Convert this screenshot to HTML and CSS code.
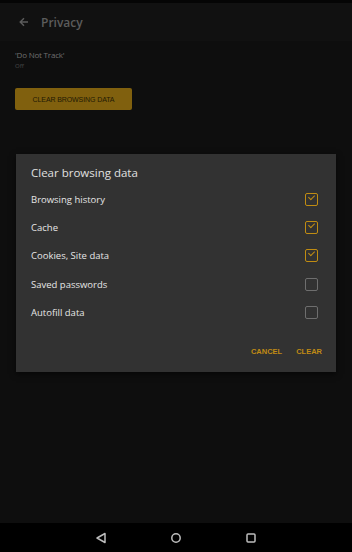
FILE: index.html
```html
<!DOCTYPE html>
<html lang="en">
<head>
    <meta charset="UTF-8">
    <meta name="viewport" content="width=device-width, initial-scale=1.0">
    <title>Privacy</title>
    <link rel="stylesheet" href="styles.css">
</head>
<body>
    <div class="screen">
        <div class="status"></div>
        <header class="topbar">
            <svg class="back" width="10" height="10" viewBox="0 0 10 10">
                <path d="M9 5H1.5M5 1.2L1.2 5L5 8.8" fill="none" stroke="#5c5c5c" stroke-width="1.4"/>
            </svg>
            <span class="title">Privacy</span>
        </header>
        <main class="content">
            <div class="pref">
                <div class="pref-name">'Do Not Track'</div>
                <div class="pref-value">Off</div>
            </div>
            <button class="clear-btn">CLEAR BROWSING DATA</button>

            <div class="dialog">
                <div class="dialog-title">Clear browsing data</div>
                <ul class="options">
                    <li><span>Browsing history</span><span class="box checked"></span></li>
                    <li><span>Cache</span><span class="box checked"></span></li>
                    <li><span>Cookies, Site data</span><span class="box checked"></span></li>
                    <li><span>Saved passwords</span><span class="box"></span></li>
                    <li><span>Autofill data</span><span class="box"></span></li>
                </ul>
                <div class="actions">
                    <span>CANCEL</span>
                    <span>CLEAR</span>
                </div>
            </div>
        </main>
        <nav class="navbar">
            <svg width="12" height="12" viewBox="0 0 12 12"><path d="M10 1.5V10.5L2 6Z" fill="none" stroke="#bdbdbd" stroke-width="1.5" stroke-linejoin="round"/></svg>
            <svg width="12" height="12" viewBox="0 0 12 12"><circle cx="6" cy="6" r="4.2" fill="none" stroke="#bdbdbd" stroke-width="1.5"/></svg>
            <svg width="12" height="12" viewBox="0 0 12 12"><rect x="2" y="2" width="8" height="8" rx="1" fill="none" stroke="#bdbdbd" stroke-width="1.5"/></svg>
        </nav>
    </div>
</body>
</html>
```

FILE: styles.css
```css
html, body {
    margin: 0;
    padding: 0;
    background-color: #0e0e0e;
}
body {
    font-family: "Open Sans", "Noto Sans", sans-serif;
}
.screen {
    width: 352px;
    height: 552px;
    display: flex;
    flex-direction: column;
    background-color: #0e0e0e;
}
.status {
    height: 3px;
    background-color: #050505;
}
.topbar {
    height: 38px;
    display: flex;
    align-items: center;
    padding-left: 19px;
    background-color: #111111;
}
.back {
    margin-right: 12px;
}
.title {
    font-size: 12px;
    font-weight: 600;
    color: #5c5c5c;
}
.content {
    flex: 1;
    padding: 8px 15px 0 15px;
}
.pref-name {
    font-size: 8px;
    color: #6e6e6e;
    letter-spacing: -0.2px;
}
.pref-value {
    font-size: 6px;
    color: #4a4a4a;
    margin-top: 2px;
}
.clear-btn {
    margin-top: 18px;
    width: 117px;
    height: 22px;
    border: none;
    border-radius: 2px;
    background-color: #80600e;
    color: #221a04;
    font-family: "Liberation Sans", sans-serif;
    font-size: 7px;
    padding: 0;
    letter-spacing: -0.1px;
}
.dialog {
    margin-top: 44px;
    margin-left: 1px;
    width: 320px;
    height: 218px;
    background-color: #323232;
    box-shadow: 0 2px 6px rgba(0,0,0,0.6);
    box-sizing: border-box;
    padding: 11px 18px 0 15px;
}
.dialog-title {
    font-size: 11.5px;
    color: #e0e0e0;
    height: 17px;
}
.options {
    list-style: none;
    margin: 0;
    padding: 0;
    margin-top: 3px;
}
.options li {
    height: 28.3px;
    display: flex;
    align-items: center;
    justify-content: space-between;
    font-size: 9.5px;
    color: #e6e6e6;
}
.box {
    width: 11px;
    height: 11px;
    border: 1.6px solid #6e6e6e;
    border-radius: 2px;
    position: relative;
}
.box.checked {
    border-color: #c08c12;
}
.box.checked::after {
    content: "";
    position: absolute;
    left: 3px;
    top: 1px;
    width: 5px;
    height: 3px;
    border-left: 1.6px solid #c08c12;
    border-bottom: 1.6px solid #c08c12;
    transform: rotate(-45deg);
    transform-origin: 40% 60%;
}
.actions {
    display: flex;
    justify-content: flex-end;
    gap: 14px;
    margin-top: 21px;
    margin-right: -4px;
    font-family: "Liberation Sans", sans-serif;
    font-size: 7.5px;
    font-weight: bold;
    color: #c08a14;
}
.navbar {
    height: 29px;
    background-color: #000000;
    display: flex;
    align-items: center;
    justify-content: center;
    gap: 63px;
}
```
